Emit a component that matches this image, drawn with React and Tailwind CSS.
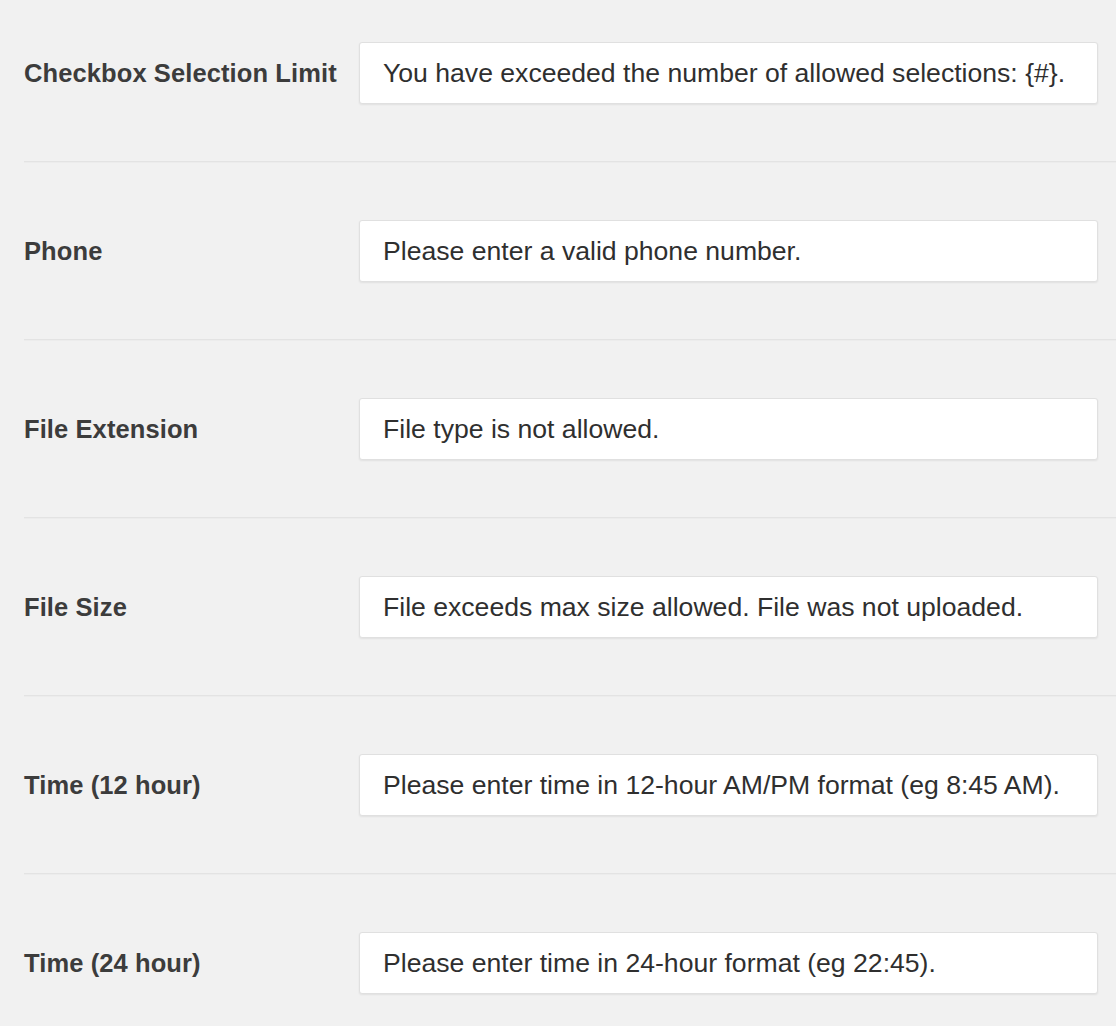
const rows = [
  { label: 'Checkbox Selection Limit', value: 'You have exceeded the number of allowed selections: {#}.' },
  { label: 'Phone', value: 'Please enter a valid phone number.' },
  { label: 'File Extension', value: 'File type is not allowed.' },
  { label: 'File Size', value: 'File exceeds max size allowed. File was not uploaded.' },
  { label: 'Time (12 hour)', value: 'Please enter time in 12-hour AM/PM format (eg 8:45 AM).' },
  { label: 'Time (24 hour)', value: 'Please enter time in 24-hour format (eg 22:45).' },
];

const SettingRow = ({ label, value, last }) => (
  <div>
    <div className="flex items-center h-[62px] pr-[18px]">
      <label className="w-[335px] shrink-0 text-[25.5px] font-bold text-[#3c3c3c] tracking-[0.1px]">{label}</label>
      <input
        type="text"
        readOnly
        defaultValue={value}
        className="flex-1 h-[62px] px-[23px] bg-white border border-[#e0e0e0] rounded-[3px] shadow-[0_1px_2px_rgba(0,0,0,0.07)] text-[26.6px] text-[#2f2f2f] outline-none"
      />
    </div>
    {!last && <div className="my-[57px] border-t border-t-[#e3e3e3] border-b border-b-[#ececec]" />}
  </div>
);

export default function App() {
  return (
    <div
      className="min-h-screen bg-[#f1f1f1] pl-6 pt-[42px] pb-[33px]"
      style={{ fontFamily: '"Liberation Sans", Arial, sans-serif' }}
    >
      {rows.map((r, i) => (
        <SettingRow key={r.label} label={r.label} value={r.value} last={i === rows.length - 1} />
      ))}
    </div>
  );
}
